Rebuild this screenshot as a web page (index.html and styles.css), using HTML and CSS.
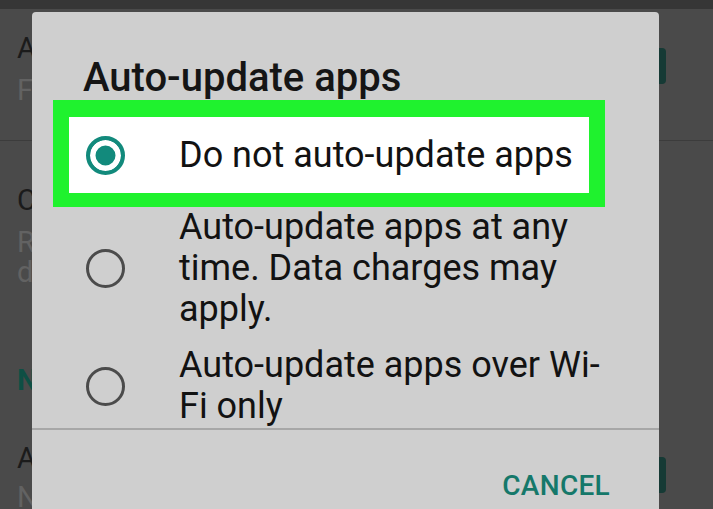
FILE: index.html
```html
<!DOCTYPE html>
<html lang="en">
<head>
  <meta charset="UTF-8" />
  <meta name="viewport" content="width=device-width, initial-scale=1.0" />
  <title>Auto-update apps</title>
  <link rel="stylesheet" href="styles.css">
</head>
<body>
  <div class="screen">
    <div class="status-bar"></div>

    <div class="settings">
      <div class="setting first">
        <div class="setting-text">
          <div class="setting-title">Add icon to Home screen</div>
          <div class="setting-sub">For new apps</div>
        </div>
        <span class="checkbox"></span>
      </div>

      <div class="setting second">
        <div class="setting-text">
          <div class="setting-title">Clear local search history</div>
          <div class="setting-sub multi">Remove searches you have performed from this<br>device</div>
        </div>
      </div>

      <div class="section-head">Notifications</div>

      <div class="setting third">
        <div class="setting-text">
          <div class="setting-title">App updates</div>
          <div class="setting-sub">Notify me about updates</div>
        </div>
        <span class="checkbox low"></span>
      </div>
    </div>

    <div class="dialog">
      <div class="dialog-title">Auto-update apps</div>

      <div class="options">
        <label class="option highlighted">
          <span class="radio checked"></span>
          <span class="option-text">Do not auto-update apps</span>
        </label>
        <label class="option">
          <span class="radio"></span>
          <span class="option-text">Auto-update apps at any time. Data charges may apply.</span>
        </label>
        <label class="option last">
          <span class="radio"></span>
          <span class="option-text">Auto-update apps over Wi-Fi only</span>
        </label>
      </div>

      <div class="dialog-actions">
        <button class="text-btn">CANCEL</button>
      </div>
    </div>
  </div>
</body>
</html>
```

FILE: styles.css
```css
* {
  box-sizing: border-box;
}

body {
  margin: 0;
  padding: 0;
  background: #4a4a4a;
  font-family: Roboto, 'Noto Sans', sans-serif;
  overflow: hidden;
}

.screen {
  position: relative;
  width: 713px;
  height: 509px;
  overflow: hidden;
}

.status-bar {
  height: 9px;
  background: #363636;
}

/* dimmed settings list behind the dialog */
.settings {
  display: flex;
  flex-direction: column;
}

.setting {
  display: flex;
  align-items: flex-start;
  justify-content: space-between;
  padding-left: 17px;
}

.setting.first {
  padding-top: 21px;
  padding-bottom: 32px;
  border-bottom: 1px solid #3c3c3c;
}

.setting.second {
  padding-top: 41px;
}

.setting.third {
  margin-top: 42px;
}

.setting-title {
  font-size: 29px;
  line-height: 36px;
  color: #1b1b1b;
  white-space: nowrap;
}

.setting-sub {
  font-size: 29px;
  line-height: 36px;
  margin-top: 6px;
  color: #626262;
  white-space: nowrap;
}

.second .setting-sub {
  line-height: 30px;
  margin-top: 9px;
}

.third .setting-sub {
  margin-top: 3px;
}

.section-head {
  margin-top: 75px;
  padding-left: 17px;
  font-size: 29px;
  line-height: 36px;
  font-weight: 700;
  color: #0e4f44;
}

.checkbox {
  width: 36px;
  height: 36px;
  margin-top: 18px;
  margin-right: 47px;
  border-radius: 4px;
  background: #163a35;
}

.checkbox.low {
  margin-top: 17px;
}

/* dialog */
.dialog {
  position: absolute;
  left: 32px;
  top: 12px;
  width: 627px;
  height: 520px;
  background: #cfcfcf;
  border-radius: 4px;
  padding-top: 44px;
  display: flex;
  flex-direction: column;
}

.dialog-title {
  padding-left: 51px;
  font-size: 40px;
  line-height: 44px;
  font-weight: 500;
  color: #151515;
}

.options {
  display: flex;
  flex-direction: column;
  border-bottom: 2px solid #a7a7a7;
  padding-bottom: 1px;
}

.option {
  display: flex;
  align-items: center;
  gap: 54px;
  padding-left: 54px;
  padding-right: 44px;
}

.option.last {
  margin-top: 15px;
}

.option.highlighted {
  margin: 0 54px 0 21px;
  padding: 18px 16px 17px 17px;
  border: 16px solid #1ff22e;
  border-top-width: 17px;
  border-bottom-width: 14px;
  background: #fff;
}

.radio {
  flex: none;
  width: 39px;
  height: 39px;
  border-radius: 50%;
  border: 3.5px solid #4b4b4b;
}

.radio.checked {
  border: 4px solid #128a7c;
  background: #128a7c;
  box-shadow: inset 0 0 0 5.5px #fff;
}

.option-text {
  font-size: 36px;
  line-height: 41px;
  color: #121212;
}

.dialog-actions {
  display: flex;
  justify-content: flex-end;
  padding-top: 40px;
  padding-right: 49px;
}

.text-btn {
  border: none;
  background: none;
  padding: 0;
  font-family: Roboto, 'Noto Sans', sans-serif;
  font-size: 28px;
  line-height: 32px;
  font-weight: 500;
  letter-spacing: 0.3px;
  color: #15786a;
  cursor: pointer;
}
```
